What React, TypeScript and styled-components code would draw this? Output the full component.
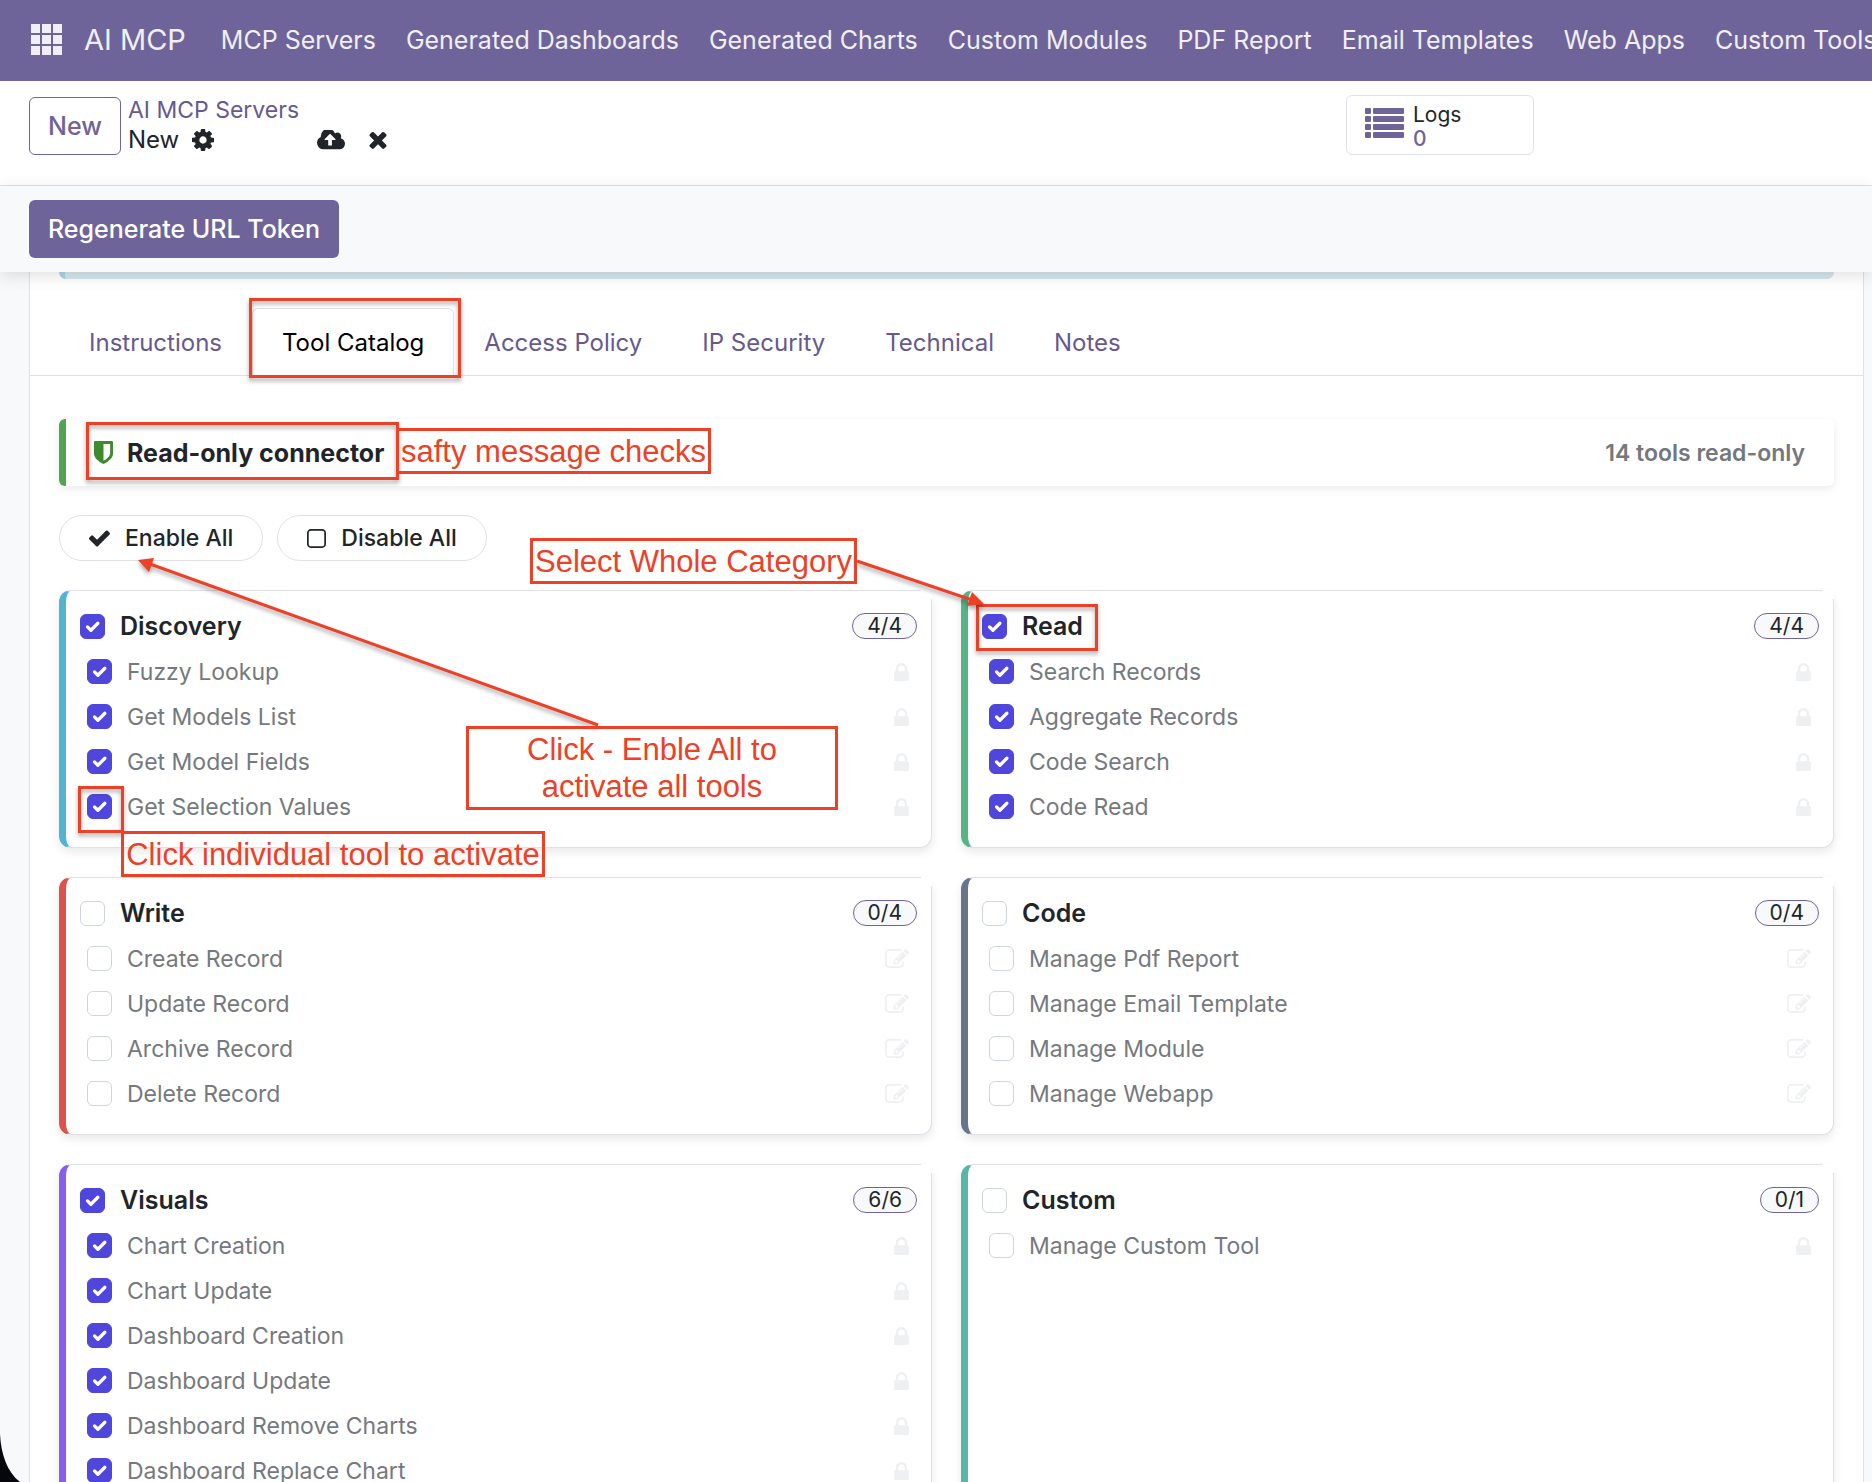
import React, { useState } from "react";
import styled, { createGlobalStyle } from "styled-components";

const purple = "#6f6499";
const linkPurple = "#66598f";
const ink = "#212529";
const line = "#dee2e6";
const marker = "#ec4127";

const GlobalStyle = createGlobalStyle`
  *, *::before, *::after { box-sizing: border-box; }
  body {
    margin: 0;
    background: #fff;
    color: ${ink};
    font-family: Inter, "Liberation Sans", sans-serif;
    font-size: 24px;
    line-height: 30px;
  }
  button { font: inherit; cursor: pointer; }
  a { color: inherit; text-decoration: none; }
`;

const Shell = styled.div`
  position: relative;
  display: flex;
  flex-direction: column;
  height: 100vh;
  overflow: hidden;
`;

const NavBar = styled.header`
  flex: none;
  display: flex;
  align-items: center;
  height: 81px;
  padding: 0 0 2px 31px;
  background: ${purple};
  color: #f0eff5;
  font-size: 25px;
  white-space: nowrap;
  overflow: hidden;
`;

const AppsButton = styled.button`
  display: flex;
  padding: 0;
  border: 0;
  background: none;
  color: inherit;
`;

const Brand = styled.a`
  margin: 0 35px 0 22px;
  font-size: 29px;
`;

const NavLinks = styled.nav`
  display: flex;
  gap: 30px;
`;

const ControlPanel = styled.section`
  flex: none;
  display: flex;
  align-items: flex-start;
  height: 105px;
  padding: 14px 338px 0 29px;
  border-bottom: 1px solid ${line};
`;

const NewButton = styled.button`
  height: 58px;
  margin: 2px 7px 0 0;
  padding: 0 18px;
  border: 1px solid ${purple};
  border-radius: 6px;
  background: #fff;
  color: ${purple};
  font-size: 25px;
  font-weight: 500;
`;

const Crumbs = styled.div`
  display: flex;
  flex-direction: column;
  line-height: 30px;
`;

const CrumbLink = styled.a`
  color: ${linkPurple};
  font-size: 23px;
`;

const CrumbRow = styled.div`
  display: flex;
  align-items: center;
`;

const IconButton = styled.button<{ $before: number }>`
  display: flex;
  margin-left: ${(p) => p.$before}px;
  padding: 0;
  border: 0;
  background: none;
  color: ${ink};
`;

const StatButton = styled.button`
  display: flex;
  align-items: flex-start;
  gap: 9px;
  width: 188px;
  height: 60px;
  margin-left: auto;
  padding: 7px 0 0 18px;
  border: 1px solid ${line};
  border-radius: 6px;
  background: #fff;
  color: ${purple};
  font-size: 21px;
  line-height: 24px;
  text-align: left;
`;

const StatIcon = styled.span`
  display: flex;
  padding-top: 5px;
`;

const StatText = styled.span`
  display: flex;
  flex-direction: column;
`;

const StatName = styled.span`
  color: ${ink};
`;

const StatValue = styled.span`
  font-weight: 500;
`;

const StatusBar = styled.section`
  flex: none;
  position: relative;
  z-index: 1;
  padding: 14px 29px;
  background: #f8f9fb;
  box-shadow: 0 4px 16px rgba(0, 0, 0, 0.12);
`;

const PrimaryButton = styled.button`
  display: block;
  height: 58px;
  padding: 0 19px;
  border: 0;
  border-radius: 6px;
  background: ${purple};
  color: #fff;
  font-size: 25px;
  font-weight: 500;
`;

const Content = styled.main`
  flex: 1;
  min-height: 0;
  overflow: hidden;
  padding: 0 8px 0 29px;
  background: #f8f9fb;
`;

const Sheet = styled.div`
  border: solid ${line};
  border-width: 0 1px;
  background: #fff;
`;

const NoticeEdge = styled.div`
  height: 7px;
  margin: 0 29px 29px;
  border-left: 6px solid #a9d5df;
  border-radius: 0 0 8px 8px;
  background: #d4e7ec;
`;

const TabList = styled.div`
  display: flex;
  padding: 0 29px;
  border-bottom: 1px solid ${line};
`;

const Tab = styled.button<{ $active: boolean }>`
  height: 68px;
  margin-bottom: -1px;
  padding: 2px 29px 0;
  border: 1px solid ${(p) => (p.$active ? line : "transparent")};
  border-bottom-color: ${(p) => (p.$active ? "#fff" : "transparent")};
  border-radius: 6px 6px 0 0;
  background: ${(p) => (p.$active ? "#fff" : "transparent")};
  color: ${(p) => (p.$active ? "#000" : linkPurple)};
  white-space: nowrap;
`;

const Panel = styled.div`
  display: flex;
  flex-direction: column;
  gap: 29px;
  padding: 43px 29px;
`;

const SafetyBar = styled.div`
  display: flex;
  align-items: center;
  height: 67px;
  padding: 0 29px 0 28px;
  border-left: 7px solid #52a550;
  border-radius: 6px;
  box-shadow: 0 3px 8px rgba(0, 0, 0, 0.08);
`;

const SafetyTitle = styled.strong`
  margin-left: 14px;
  font-size: 25px;
  font-weight: 700;
`;

const SafetyCount = styled.span`
  margin-left: auto;
  color: #74787d;
  font-size: 23px;
  font-weight: 600;
`;

const BulkActions = styled.div`
  display: flex;
  gap: 14px;
`;

const PillButton = styled.button`
  display: flex;
  align-items: center;
  gap: 15px;
  height: 46px;
  padding: 0 29px;
  border: 1px solid ${line};
  border-radius: 24px;
  background: #fff;
  color: ${ink};
  font-size: 23px;
  font-weight: 500;
`;

const CardGrid = styled.div`
  display: grid;
  grid-template-columns: 1fr 1fr;
  gap: 29px;
`;

const Card = styled.section<{ $accent: string }>`
  position: relative;
  padding: 12px 14px 18px;
  border: 1px solid ${line};
  border-left: 7px solid ${(p) => p.$accent};
  border-radius: 12px;
  background: #fff;
  box-shadow: 0 4px 10px rgba(0, 0, 0, 0.09);

  &::after {
    content: "";
    position: absolute;
    top: -1px;
    right: -1px;
    width: 11px;
    height: 9px;
    background: #fff;
  }
`;

const CardHeader = styled.div`
  display: flex;
  align-items: center;
  justify-content: space-between;
  height: 46px;
`;

const CardTitle = styled.label`
  display: flex;
  align-items: center;
  gap: 15px;
  font-size: 25px;
  font-weight: 600;
`;

const Badge = styled.span`
  height: 26px;
  padding: 0 14px;
  border: 1px solid ${purple};
  border-radius: 13px;
  background: #f8f9fb;
  font-size: 21px;
  line-height: 24px;
`;

const ToolList = styled.ul`
  margin: 0;
  padding: 0 8px 0 7px;
  list-style: none;
`;

const ToolRow = styled.li`
  display: flex;
  align-items: center;
  justify-content: space-between;
  height: 45px;
  color: #eff0f2;
`;

const ToolLabel = styled.label`
  display: flex;
  align-items: center;
  gap: 15px;
  color: #75797e;
  font-size: 23px;
`;

const CheckBox = styled.input`
  appearance: none;
  flex: none;
  width: 25px;
  height: 25px;
  margin: 0;
  border: 1px solid #ced4e0;
  border-radius: 6px;
  background: #fff center / 25px 25px no-repeat;

  &:checked {
    border-color: #4f46dc;
    background-color: #4f46dc;
    background-image: url("data:image/svg+xml,%3Csvg xmlns='http://www.w3.org/2000/svg' viewBox='0 0 20 20'%3E%3Cpath fill='none' stroke='%23fff' stroke-linecap='round' stroke-linejoin='round' stroke-width='2.6' d='m6 10.300 2.700 2.700 5.600-5.600'/%3E%3C/svg%3E");
  }
`;

const MarkupLayer = styled.div`
  position: absolute;
  inset: 0;
  z-index: 2;
  overflow: hidden;
  pointer-events: none;
`;

type Spot = { $x: number; $y: number; $w: number; $h: number };

const Highlight = styled.div<Spot>`
  position: absolute;
  left: ${(p) => p.$x}px;
  top: ${(p) => p.$y}px;
  width: ${(p) => p.$w}px;
  height: ${(p) => p.$h}px;
  border: 3px solid ${marker};
  filter: drop-shadow(0 3px 2px rgba(0, 0, 0, 0.35));
`;

const Callout = styled.div<Spot>`
  position: absolute;
  left: ${(p) => p.$x}px;
  top: ${(p) => p.$y}px;
  width: ${(p) => p.$w}px;
  height: ${(p) => p.$h}px;
  display: flex;
  align-items: center;
  justify-content: center;
  border: 3px solid ${marker};
  color: ${marker};
  font-family: "Liberation Sans", Arial, sans-serif;
  font-size: 31px;
  line-height: 37px;
  text-align: center;
  white-space: pre;
`;

const Arrows = styled.svg`
  position: absolute;
  top: 0;
  left: 0;
  filter: drop-shadow(0 3px 2px rgba(0, 0, 0, 0.35));
`;

const WindowCorner = styled.svg`
  position: absolute;
  left: 0;
  bottom: 0;
`;

const shapes = {
  cog: "M1152 896q0-106-75-181t-181-75-181 75-75 181 75 181 181 75 181-75 75-181zm512-109v222q0 12-8 23t-20 13l-185 28q-19 54-39 91 35 50 107 138 10 12 10 25t-9 23q-27 37-99 108t-94 71q-12 0-26-9l-138-108q-44 23-91 38-16 136-29 186-7 28-36 28h-222q-14 0-24.500-8.500t-11.500-21.500l-28-184q-49-16-90-37l-141 107q-10 9-25 9-14 0-25-11-126-114-165-168-7-10-7-23 0-12 8-23 15-21 51-66.500t54-70.500q-27-50-41-99l-183-27q-13-2-21-12.500t-8-23.500v-222q0-12 8-23t19-13l186-28q14-46 39-92-40-57-107-138-10-12-10-24 0-10 9-23 26-36 98.500-107.500t94.500-71.500q13 0 26 10l138 107q44-23 91-38 16-136 29-186 7-28 36-28h222q14 0 24.500 8.500t11.500 21.500l28 184q49 16 90 37l142-107q9-9 24-9 13 0 25 10 129 119 165 170 7 8 7 22 0 12-8 23-15 21-51 66.500t-54 70.500q26 50 41 98l183 28q13 2 21 12.500t8 23.500z",
  cloud: "M1216 864q0-14-9-23l-352-352q-9-9-23-9t-23 9l-351 351q-10 12-10 24 0 14 9 23t23 9h224v352q0 13 9.500 22.500t22.500 9.500h192q13 0 22.500-9.500t9.500-22.500v-352h224q13 0 22.500-9.500t9.500-22.500zm640 288q0 159-112.500 271.500t-271.500 112.500h-1088q-185 0-316.500-131.500t-131.500-316.500q0-130 70-240t188-165q-2-30-2-43 0-212 150-362t362-150q156 0 285.500 87t188.500 231q71-62 166-62 106 0 181 75t75 181q0 76-41 138 130 31 213.500 135.500t83.500 238.500z",
  times: "M1490 1322q0 40-28 68l-136 136q-28 28-68 28t-68-28l-294-294-294 294q-28 28-68 28t-68-28l-136-136q-28-28-28-68t28-68l294-294-294-294q-28-28-28-68t28-68l136-136q28-28 68-28t68 28l294 294 294-294q28-28 68-28t68 28l136 136q28 28 28 68t-28 68l-294 294 294 294q28 28 28 68z",
  check: "M1671 566q0 40-28 68l-724 724-136 136q-28 28-68 28t-68-28l-136-136-362-362q-28-28-28-68t28-68l136-136q28-28 68-28t68 28l294 295 656-657q28-28 68-28t68 28l136 136q28 28 28 68z",
  square: "M1312 256h-832q-66 0-113 47t-47 113v832q0 66 47 113t113 47h832q66 0 113-47t47-113v-832q0-66-47-113t-113-47zm288 160v832q0 119-84.500 203.500t-203.500 84.500h-832q-119 0-203.500-84.500t-84.500-203.500v-832q0-119 84.500-203.500t203.500-84.500h832q119 0 203.500 84.500t84.500 203.500z",
  shield: "M1344 960v-640h-448v1137q119-63 213-137 235-184 235-360zm192-768v768q0 86-33.500 170.500t-83 150-118 127.500-126.500 103-121 77.500-89.500 49.500-42.500 20q-12 6-26 6t-26-6q-16-7-42.500-20t-89.500-49.500-121-77.500-126.500-103-118-127.500-83-150-33.500-170.500v-768q0-26 19-45t45-19h1152q26 0 45 19t19 45z",
  lock: "M640 768h512v-192q0-106-75-181t-181-75-181 75-75 181v192zm832 96v576q0 40-28 68t-68 28h-960q-40 0-68-28t-28-68v-576q0-40 28-68t68-28h32v-192q0-184 132-316t316-132 316 132 132 316v192h32q40 0 68 28t28 68z",
  edit: "M888 1184l116-116-152-152-116 116v56h96v96h56zm440-720q-16-16-33 1l-350 350q-17 17-1 33t33-1l350-350q17-17 1-33zm80 594v190q0 119-84.500 203.500t-203.500 84.500h-832q-119 0-203.500-84.500t-84.500-203.500v-832q0-119 84.500-203.500t203.500-84.500h832q63 0 117 25 15 7 18 23 3 17-9 29l-49 49q-14 14-32 8-23-6-45-6h-832q-66 0-113 47t-47 113v832q0 66 47 113t113 47h832q66 0 113-47t47-113v-126q0-13 9-22l64-64q15-15 35-7t20 29zm-96-738l288 288-672 672h-288v-288zm444 132l-92 92-288-288 92-92q28-28 68-28t68 28l152 152q28 28 28 68t-28 68z",
};

const boxes: Record<keyof typeof shapes, [string, number, number]> = {
  cog: ["128 128 1536 1536", 22, 22],
  cloud: ["-64 256 1920 1280", 28, 20],
  times: ["302 302 1188 1252", 18, 18],
  check: ["121 333 1550 1189", 21, 17],
  square: ["192 128 1408 1408", 19, 19],
  shield: ["256 128 1280 1536", 19, 23],
  lock: ["320 128 1152 1408", 15, 18],
  edit: ["0 128 1792 1408", 24, 19],
};

function Icon({ name }: { name: keyof typeof shapes }) {
  const [viewBox, width, height] = boxes[name];
  return (
    <svg viewBox={viewBox} width={width} height={height} fill="currentColor" aria-hidden="true">
      <path d={shapes[name]} />
    </svg>
  );
}

function AppsIcon() {
  return (
    <svg width="31" height="31" viewBox="0 0 31 31" fill="currentColor" aria-hidden="true">
      {[0, 11, 22].map((y) => [0, 11, 22].map((x) => <rect key={`${x}-${y}`} x={x} y={y} width="9" height="9" />))}
    </svg>
  );
}

function ListIcon() {
  return (
    <svg width="39" height="30" viewBox="0 0 39 30" fill="currentColor" aria-hidden="true">
      {[0, 8, 16, 24].map((y) => (
        <g key={y}>
          <rect x="0" y={y} width="6" height="6" rx="1" />
          <rect x="8" y={y} width="31" height="6" rx="1" />
        </g>
      ))}
    </svg>
  );
}

type Group = { name: string; accent: string; icon: "lock" | "edit"; on: boolean; tools: string[] };

const groups: Group[] = [
  { name: "Discovery", accent: "#53b3d0", icon: "lock", on: true, tools: ["Fuzzy Lookup", "Get Models List", "Get Model Fields", "Get Selection Values"] },
  { name: "Read", accent: "#56b586", icon: "lock", on: true, tools: ["Search Records", "Aggregate Records", "Code Search", "Code Read"] },
  { name: "Write", accent: "#dd524c", icon: "edit", on: false, tools: ["Create Record", "Update Record", "Archive Record", "Delete Record"] },
  { name: "Code", accent: "#68748b", icon: "edit", on: false, tools: ["Manage Pdf Report", "Manage Email Template", "Manage Module", "Manage Webapp"] },
  { name: "Visuals", accent: "#8560ec", icon: "lock", on: true, tools: ["Chart Creation", "Chart Update", "Dashboard Creation", "Dashboard Update", "Dashboard Remove Charts", "Dashboard Replace Chart"] },
  { name: "Custom", accent: "#58b5a8", icon: "lock", on: false, tools: ["Manage Custom Tool"] },
];

const menu = ["MCP Servers", "Generated Dashboards", "Generated Charts", "Custom Modules", "PDF Report", "Email Templates", "Web Apps", "Custom Tools"];
const tabs = ["Instructions", "Tool Catalog", "Access Policy", "IP Security", "Technical", "Notes"];
const allTools = groups.flatMap((g) => g.tools);

export default function App() {
  const [tab, setTab] = useState("Tool Catalog");
  const [enabled, setEnabled] = useState<string[]>(groups.filter((g) => g.on).flatMap((g) => g.tools));

  const setTools = (tools: string[], on: boolean) =>
    setEnabled((current) => {
      const rest = current.filter((t) => !tools.includes(t));
      return on ? [...rest, ...tools] : rest;
    });

  return (
    <Shell>
      <GlobalStyle />
      <NavBar>
        <AppsButton aria-label="Apps"><AppsIcon /></AppsButton>
        <Brand href="#">AI MCP</Brand>
        <NavLinks>
          {menu.map((item) => <a key={item} href="#">{item}</a>)}
        </NavLinks>
      </NavBar>

      <ControlPanel>
        <NewButton>New</NewButton>
        <Crumbs>
          <CrumbLink href="#">AI MCP Servers</CrumbLink>
          <CrumbRow>
            <span>New</span>
            <IconButton $before={13} aria-label="Actions"><Icon name="cog" /></IconButton>
            <IconButton $before={103} aria-label="Save"><Icon name="cloud" /></IconButton>
            <IconButton $before={24} aria-label="Discard"><Icon name="times" /></IconButton>
          </CrumbRow>
        </Crumbs>
        <StatButton>
          <StatIcon><ListIcon /></StatIcon>
          <StatText>
            <StatName>Logs</StatName>
            <StatValue>0</StatValue>
          </StatText>
        </StatButton>
      </ControlPanel>

      <StatusBar>
        <PrimaryButton>Regenerate URL Token</PrimaryButton>
      </StatusBar>

      <Content>
        <Sheet>
          <NoticeEdge />
          <TabList role="tablist">
            {tabs.map((name) => (
              <Tab key={name} role="tab" aria-selected={tab === name} $active={tab === name} onClick={() => setTab(name)}>
                {name}
              </Tab>
            ))}
          </TabList>
          <Panel>
            <SafetyBar>
              <svg viewBox="256 128 1280 1536" width="19" height="23" fill="#3d8b2f" aria-hidden="true">
                <path d={shapes.shield} />
              </svg>
              <SafetyTitle>Read-only connector</SafetyTitle>
              <SafetyCount>14 tools read-only</SafetyCount>
            </SafetyBar>
            <BulkActions>
              <PillButton onClick={() => setTools(allTools, true)}><Icon name="check" />Enable All</PillButton>
              <PillButton onClick={() => setTools(allTools, false)}><Icon name="square" />Disable All</PillButton>
            </BulkActions>
            <CardGrid>
              {groups.map((group) => {
                const count = group.tools.filter((t) => enabled.includes(t)).length;
                return (
                  <Card key={group.name} $accent={group.accent}>
                    <CardHeader>
                      <CardTitle>
                        <CheckBox
                          type="checkbox"
                          checked={count === group.tools.length}
                          onChange={(e) => setTools(group.tools, e.target.checked)}
                        />
                        {group.name}
                      </CardTitle>
                      <Badge>{count}/{group.tools.length}</Badge>
                    </CardHeader>
                    <ToolList>
                      {group.tools.map((tool) => (
                        <ToolRow key={tool}>
                          <ToolLabel>
                            <CheckBox
                              type="checkbox"
                              checked={enabled.includes(tool)}
                              onChange={(e) => setTools([tool], e.target.checked)}
                            />
                            {tool}
                          </ToolLabel>
                          <Icon name={group.icon} />
                        </ToolRow>
                      ))}
                    </ToolList>
                  </Card>
                );
              })}
            </CardGrid>
          </Panel>
        </Sheet>
      </Content>

      <MarkupLayer>
        <Highlight $x={249} $y={298} $w={212} $h={80} />
        <Highlight $x={86} $y={422} $w={313} $h={58} />
        <Highlight $x={976} $y={604} $w={122} $h={47} />
        <Highlight $x={78} $y={786} $w={46} $h={47} />
        <Arrows width="1000" height="740" fill={marker} stroke={marker}>
          <path d="M598 725L150 564" strokeWidth="3" />
          <path d="M138 560L154 558L149 572Z" stroke="none" />
          <path d="M857 561L972 600" strokeWidth="3" />
          <path d="M984 604L972 592L967 606Z" stroke="none" />
        </Arrows>
        <Callout $x={396} $y={428} $w={315} $h={46}>safty message checks</Callout>
        <Callout $x={530} $y={538} $w={327} $h={46}>Select Whole Category</Callout>
        <Callout $x={466} $y={726} $w={372} $h={84}>{"Click - Enble All to\nactivate all tools"}</Callout>
        <Callout $x={121} $y={831} $w={424} $h={46}>Click individual tool to activate</Callout>
        <WindowCorner width="20" height="48" viewBox="0 0 20 48" aria-hidden="true">
          <path d="M0 0C1 20 7 38 20 48H0Z" fill="#05070d" />
        </WindowCorner>
      </MarkupLayer>
    </Shell>
  );
}
